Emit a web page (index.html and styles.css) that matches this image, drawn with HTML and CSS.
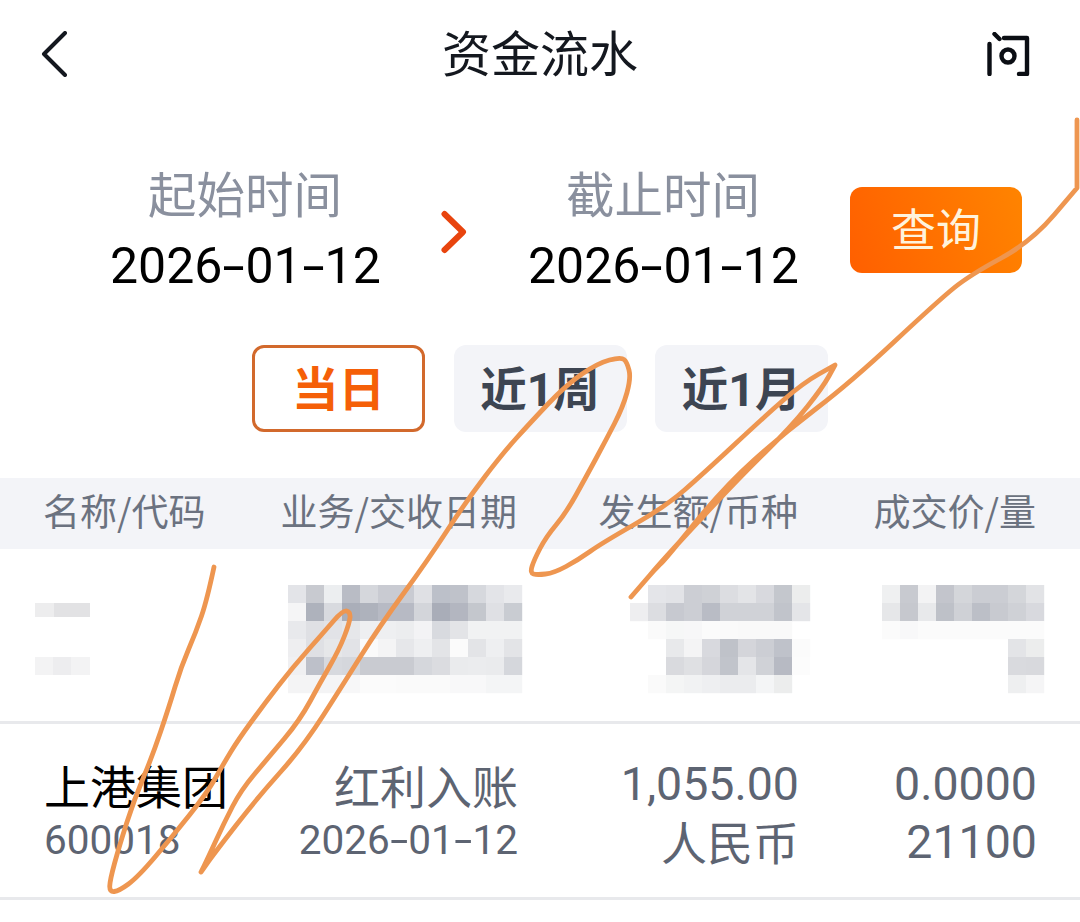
FILE: index.html
```html
<!DOCTYPE html>
<html lang="zh-CN">
<head>
<meta charset="utf-8">
<title>资金流水</title>
<link rel="stylesheet" href="styles.css">
</head>
<body>
<div class="page">
  <header class="nav">
    <svg class="nav-back" width="26" height="46" viewBox="0 0 26 46"><path d="M24 2 3 23l21 21" fill="none" stroke="#14181f" stroke-width="4" stroke-linecap="round" stroke-linejoin="round"/></svg>
    <h1 class="nav-title">资金流水</h1>
    <svg class="nav-help" width="44" height="44" viewBox="0 0 44 44"><g fill="none" stroke="#0b0e14" stroke-width="4.400" stroke-linecap="round" stroke-linejoin="round"><path d="M3.500 12v30M8.500 2l5 5M18 6h23v36h-8"/><circle cx="22" cy="24" r="6.500"/></g></svg>
  </header>

  <section class="range">
    <div class="range-col">
      <div class="range-label">起始时间</div>
      <div class="range-date">2026<span class="dash">-</span>01<span class="dash">-</span>12</div>
    </div>
    <svg class="range-arrow" width="26" height="44" viewBox="0 0 26 44"><path d="M3.500 4 22 22 3.500 40" fill="none" stroke="#e8440e" stroke-width="6" stroke-linecap="round" stroke-linejoin="round"/></svg>
    <div class="range-col">
      <div class="range-label">截止时间</div>
      <div class="range-date">2026<span class="dash">-</span>01<span class="dash">-</span>12</div>
    </div>
    <button class="query">查询</button>
  </section>

  <section class="filters">
    <div class="chip chip-on">当日</div>
    <div class="chip">近1周</div>
    <div class="chip">近1月</div>
  </section>

  <div class="thead">
    <div class="c1">名称/代码</div>
    <div class="c2">业务/交收日期</div>
    <div class="c3">发生额/币种</div>
    <div class="c4">成交价/量</div>
  </div>

  <div class="row row-hidden">
    <svg class="mosaic" width="1080" height="172" viewBox="0 0 1080 172">
      <g>
        <rect x="35" y="23" width="19" height="14" fill="#ededee"/><rect x="54" y="23" width="36" height="14" fill="#e2e2e4"/>
        <rect x="35" y="77" width="18" height="18" fill="#f3f3f4"/><rect x="53" y="77" width="18" height="18" fill="#ededef"/><rect x="71" y="77" width="19" height="18" fill="#f3f3f4"/>
      </g>
      <g id="b2"></g><g id="b3"></g><g id="b4"></g>
    </svg>
  </div>

  <div class="row">
    <div class="c1"><div class="name">上港集团</div><div class="sub">600018</div></div>
    <div class="c2"><div class="top">红利入账</div><div class="sub">2026<span class="dash">-</span>01<span class="dash">-</span>12</div></div>
    <div class="c3"><div class="top num">1,055.00</div><div class="sub cn">人民币</div></div>
    <div class="c4"><div class="top num">0.0000</div><div class="sub num">21100</div></div>
  </div>
</div>

<svg class="scribble" width="1080" height="922" viewBox="0 0 1080 922">
  <path id="ink" fill="none" stroke="#ee9650" stroke-width="4.800" stroke-linecap="round" stroke-linejoin="round" d="M214 567 207 600 196 632 181 667 169 707 152 757 134 800 119 847 110 880 109.500 892 119 891 138 877 172 837 207 793 224 763 238 740 265 703 293 667 324 632 343 610 350.500 612 349.500 623 339 650 320 683 300 720 269 757 241 790 224 823 207 860 201 872 201 872 213 855 258 797 303 747 344 683 379 627 428 560 467 500 503 453 530 423 566 385 598 363 621 357 627 362 631 378 623 407 606 440 586 477 566 513 546 537 534 560 530 573 537 575 554 573 578 560 602 543 665 507 704 473 764 417 803 383 835 365 835 365 823 387 791 427 740 477 669 553 631 597 631 597 657 567 665 560 724 487 784 433 850 383 939 300 970 275 1031 242 1077 188 1077 188 1077 120"/>
</svg>
<script src="mosaic.js"></script>
</body>
</html>
```

FILE: mosaic.js
```js
var NS = "http://www.w3.org/2000/svg";
function draw(id, x0, rows) {
  var g = document.getElementById(id);
  rows.forEach(function (r, ri) {
    r.cells.forEach(function (c, ci) {
      if (!c) return;
      var rect = document.createElementNS(NS, "rect");
      rect.setAttribute("x", x0 + (r.from + ci) * 18);
      rect.setAttribute("y", 5 + ri * 18);
      rect.setAttribute("width", 18.2);
      rect.setAttribute("height", 18.2);
      rect.setAttribute("fill", "#" + c);
      g.appendChild(rect);
    });
  });
}
draw("b2", 288, [
  {from:0,cells:["e3e4e8","c8cad0","eceef0","b9bcc5","d5d7dc","c9cbd2","c9cbd2","dfe0e4","bcc0c9","bfc2ca","d6d8dd","e3e4e8","e9eaed"]},
  {from:0,cells:["f5f5f6","aeb2bc","d8dadf","aaaeb9","aeb2bc","b7bac4","b7bac4","d3d5da","a9adb8","b3b6c0","c4c7cd","dfe0e4","c9ccd2"]},
  {from:0,cells:["e8e9ec","dfe0e4","e2e3e7","e6e7ea","eeeff1","eeeff1","ecedef","f3f3f5","d8dadf","e3e4e7","f1f2f3","f1f2f3","f1f2f3"]},
  {from:0,cells:["eeeef0","dfe0e4","e6e7e9","e2e3e7","fafafa","f4f4f5","e6e7ea","eeeff1","e3e4e7","fbfbfb","e3e4e7","eeeff1","e3e4e7"]},
  {from:0,cells:["f0f0f2","bdc0c9","d7d9de","d5d7dc","c9cbd1","c9cbd1","c9cbd1","d5d7dc","dbdce0","eaebed","ebecee","eaebed","d5d7dc"]},
  {from:0,cells:["f4f4f5","f4f4f5","f4f4f5","f7f7f8","fbfbfb","fbfbfb","fafafa","fafafa","fafafa","f8f8f9","f8f8f9","f4f5f6","f4f5f6"]}
]);
draw("b3", 630, [
  {from:1,cells:["e4e5e9","e2e3e7","ccced4","cfd1d6","dcdde1","e3e4e7","d8d9de","c4c7cd","eceded"]},
  {from:0,cells:["eeeef0","dcdde1","c7c9d0","ccced4","b9bcc5","d0d2d7","d0d2d7","d0d2d7","c1c4cb","e4e5e8"]},
  {from:1,cells:["fafafa","f6f7f7","f7f7f8","fbfbfb","fafafa","f9f9f9","f9f9f9","f9f9f9"]},
  {from:2,cells:["e8e9eb","f4f4f5","d8d9de","bfc2c9","d4d5da","ccced4","bfc2ca","fbfbfb"]},
  {from:2,cells:["d9dade","dfe0e3","d5d6db","c1c4cb","e4e5e8","d0d2d7","b7bac3","fcfcfc"]},
  {from:1,cells:["fafafa","f4f5f5","f1f2f3","eeeff1","ebecee","ebecee","f4f5f6","eceded"]}
]);
draw("b4", 882, [
  {from:0,cells:["eff0f1","c8cad0","f3f3f4","c3c5cc","d4d6da","cbcdd3","cbcdd3","d4d6da","e2e3e6"]},
  {from:0,cells:["e6e7e9","c6c8ce","e8e9eb","bec1c8","cfd1d6","bcbfc7","c8cad0","cfd1d6","d8d9de"]},
  {from:0,cells:["fbfbfb","f8f8f9","fbfbfb","fbfbfb","fbfbfb","fbfbfb","fbfbfb","fbfbfb","fbfbfb"]},
  {from:7,cells:["e3e4e7","eceded"]},
  {from:7,cells:["d9dade","d8d9dd"]},
  {from:7,cells:["eeeff0","f5f5f6"]}
]);

/* Smooth the hand-drawn stroke: midpoint quadratic curves through its points. */
(function () {
  var ink = document.getElementById("ink");
  var n = ink.getAttribute("d").replace("M", "").trim().split(/\s+/).map(Number);
  var d = "M" + n[0] + " " + n[1];
  for (var i = 2; i + 3 < n.length; i += 2) {
    d += "Q" + n[i] + " " + n[i + 1] + " " + (n[i] + n[i + 2]) / 2 + " " + (n[i + 1] + n[i + 3]) / 2;
  }
  d += "L" + n[n.length - 2] + " " + n[n.length - 1];
  ink.setAttribute("d", d);
})();
```

FILE: styles.css
```css
* { box-sizing: border-box; }
html, body { margin: 0; padding: 0; background: #fff; }
body {
  width: 1080px;
  height: 922px;
  overflow: hidden;
  position: relative;
  font-family: "Roboto", "Noto Sans CJK SC", sans-serif;
}
.page { display: flex; flex-direction: column; }

.nav {
  height: 108px;
  display: flex;
  align-items: center;
  justify-content: space-between;
  padding: 0 50px 0 40.500px;
  position: relative;
}
.nav-title {
  margin: 0;
  position: absolute;
  left: 0;
  right: 0;
  top: 0;
  text-align: center;
  font-size: 49px;
  font-weight: 400;
  color: #14181f;
  line-height: 102px;
  font-family: "Noto Sans CJK SC", sans-serif;
}

.range {
  height: 237px;
  padding: 0 58px 0 110px;
  display: flex;
  align-items: flex-start;
}
.range-col { width: 270px; text-align: center; padding-top: 52px; }
.range-label {
  font-size: 48.500px;
  line-height: 64px;
  color: #8a909e;
  font-family: "Noto Sans CJK SC", sans-serif;
}
.range-date {
  margin-top: 6px;
  font-size: 50px;
  line-height: 72px;
  color: #000;
  white-space: nowrap;
}
.dash {
  display: inline-block;
  width: 0.46em;
  text-align: center;
  transform: scaleX(1.6);
}
.range-arrow { margin: 102px 61px 0 61px; flex: none; }
.query {
  margin: 79px 0 0 auto;
  width: 172px;
  height: 86px;
  border: 0;
  border-radius: 12px;
  background: linear-gradient(70deg, #ff5f00, #ff8400);
  color: #fff3dc;
  font-size: 45px;
  font-family: "Noto Sans CJK SC", sans-serif;
  padding: 0 0 6px;
}

.filters {
  height: 133px;
  display: flex;
  justify-content: center;
  gap: 28.500px;
  align-items: flex-start;
}
.chip {
  width: 173px;
  height: 87px;
  padding-bottom: 7px;
  border-radius: 12px;
  background: #f3f4f8;
  color: #3d4552;
  font-size: 46.500px;
  font-weight: 700;
  display: flex;
  align-items: center;
  justify-content: center;
}
.chip-on {
  background: #fff;
  border: 3px solid #d2692c;
  color: #f55f08;
}

.thead {
  height: 71px;
  background: #f3f4f8;
  color: #6b7280;
  font-size: 37px;
  font-family: "Noto Sans CJK SC", sans-serif;
  display: grid;
  grid-template-columns: 174px 300px 281px 238px;
  align-items: center;
  padding: 0 44px 7px 43px;
}
.row {
  display: grid;
  grid-template-columns: 174px 300px 281px 238px;
  align-items: start;
  padding: 0 43px 0 44px;
  height: 176px;
  border-bottom: 3px solid #e8e9ec;
  color: #5d6472;
}
.row-hidden {
  display: block;
  padding: 0;
  height: 175px;
}
.mosaic { display: block; margin-top: 31px; }
.c1 { text-align: left; white-space: nowrap; }
.c2, .c3, .c4 { text-align: right; white-space: nowrap; }
.row .c1, .row .c2, .row .c3, .row .c4 { padding-top: 29px; }
.name {
  font-size: 46px;
  line-height: 62px;
  color: #000;
  font-family: "Noto Sans CJK SC", sans-serif;
}
.top {
  font-size: 46px;
  line-height: 62px;
  font-family: "Noto Sans CJK SC", sans-serif;
}
.top.num { font-family: "Roboto", sans-serif; font-size: 46.500px; }
.sub {
  font-size: 40.500px;
  line-height: 50px;
  font-family: "Roboto", sans-serif;
  white-space: nowrap;
}
.sub.cn { font-family: "Noto Sans CJK SC", sans-serif; font-size: 46px; }
.sub.num { font-size: 46.500px; line-height: 54px; }

.scribble { position: absolute; left: 0; top: 0; pointer-events: none; }
```
